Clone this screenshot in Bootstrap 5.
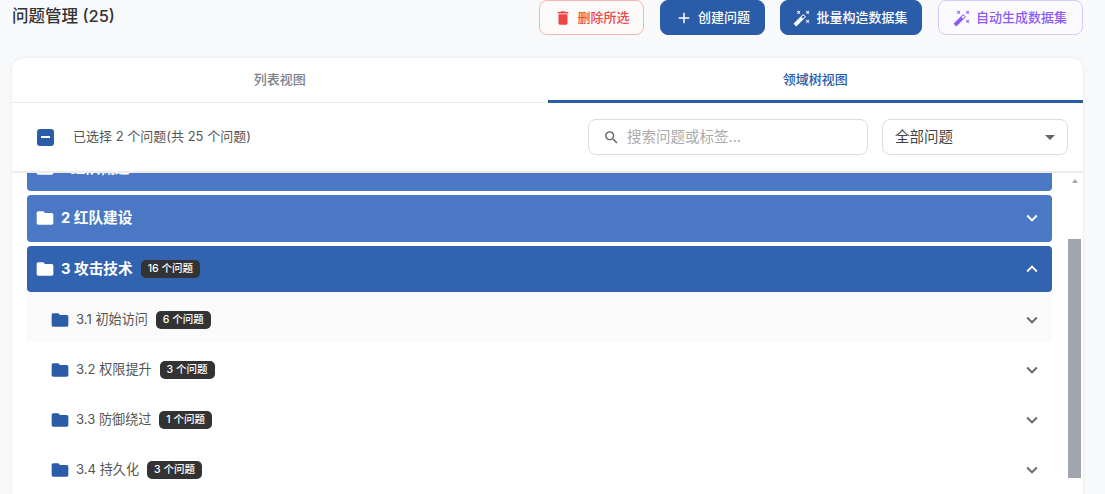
<!doctype html>
<html lang="zh-CN">

<head>
	<meta charset="utf-8">
	<meta name="viewport" content="width=device-width, initial-scale=1">
	<title>问题管理</title>
	<link href="https://cdn.jsdelivr.net/npm/bootstrap@5.3.3/dist/css/bootstrap.min.css" rel="stylesheet" crossorigin="anonymous">
	<style>
		html, body {
			height: 494px;
			overflow: hidden;
		}

		body {
			background: #f8f9fb;
			font-family: Inter, "Noto Sans CJK SC", sans-serif;
			color: #333;
		}

		.top-bar {
			height: 58px;
			padding: 0 22px 0 12px;
		}

		.page-title {
			font-size: 16.5px;
			font-weight: 500;
			line-height: 32px;
			margin: 0;
			color: #333;
		}

		.act-row {
			gap: 15.5px;
		}

		.act-btn {
			height: 35px;
			font-size: 13px;
			font-weight: 500;
			border-radius: 8px;
			padding: 0 14px;
			gap: 5px;
			border-width: 1px;
			border-style: solid;
			white-space: nowrap;
		}

		.act-btn svg {
			width: 18px;
			height: 18px;
			fill: currentColor;
		}

		.act-tight {
			padding-left: 12px;
		}

		.act-red {
			color: #f04545;
			border-color: #f9b4b4;
			background: #fdfafa;
		}

		.act-blue {
			color: #fff;
			border-color: #2b5ca8;
			background: #2b5ca8;
		}

		.act-purple {
			color: #8b5cf6;
			border-color: #d9c9fb;
			background: #fbfaff;
			padding-right: 15px;
		}

		.main-card {
			margin: 0 22px 0 12px;
			height: 460px;
			border-radius: 12px 12px 0 0;
			border: 0;
			box-shadow: 0 0 3px rgba(0, 0, 0, .1);
			overflow: hidden;
		}

		.view-tabs .nav-link {
			height: 45px;
			line-height: 43px;
			padding: 0;
			font-size: 13px;
			font-weight: 500;
			color: #7b8087;
			border-bottom: 1px solid #e9e9e9;
		}

		.view-tabs .nav-link.active {
			color: #2b5ca8;
			border-bottom: 3px solid #2b5ca8;
			border-radius: 2px 0 0 0;
		}

		.tool-row {
			height: 70px;
			padding: 0 15px 0 25px;
			border-bottom: 2px solid #ececec;
		}

		.sel-box {
			width: 17px;
			height: 17px;
			border-radius: 3px;
			background: #2b5ca8;
		}

		.sel-box span {
			width: 9px;
			height: 2px;
			background: #fff;
		}

		.sel-text {
			font-size: 13px;
			color: #555;
			margin-left: 19px;
		}

		.search-box {
			width: 280px;
			height: 36px;
			border: 1px solid #ddd;
			border-radius: 8px;
			padding: 0 14px;
			margin-left: auto;
			gap: 7px;
		}

		.search-box svg {
			width: 17px;
			height: 17px;
			fill: #666;
			flex: none;
		}

		.search-box input {
			border: 0;
			outline: 0;
			padding: 0;
			width: 100%;
			font-size: 14.5px;
			background: transparent;
		}

		.search-box input::placeholder {
			color: #aaa;
		}

		.filter-btn {
			width: 186px;
			height: 36px;
			margin-left: 14px;
			border: 1px solid #ddd;
			border-radius: 8px;
			background: #fff;
			padding: 0 12px;
			font-size: 14.5px;
			color: #444;
		}

		.filter-btn::after {
			border-top-width: 5px;
			border-left-width: 5.5px;
			border-right-width: 5.5px;
			border-top-color: #666;
			margin: 0;
		}

		.tree-wrap {
			overflow: hidden;
			height: 322px;
			padding-left: 15px;
		}

		.tree-list {
			width: 1025px;
			margin-top: -28.5px;
			flex: none;
		}

		.domain-row {
			height: 46.5px;
			margin-bottom: 4px;
			border-radius: 4px;
			padding: 0 9px 0 8px;
			color: #fff;
			font-size: 14.7px;
			font-weight: 700;
		}

		.domain-light {
			background: #4a78c4;
		}

		.domain-dark {
			background: #3263b0;
			margin-bottom: 0;
		}

		.tree-folder {
			width: 20px;
			height: 20px;
			flex: none;
			fill: currentColor;
			margin-right: 6px;
		}

		.tree-chevron {
			width: 22px;
			height: 22px;
			fill: currentColor;
			margin-left: auto;
		}

		.count-tag {
			background: #333;
			color: #fff;
			font-size: 10.5px;
			font-weight: 500;
			line-height: 18px;
			height: 18px;
			border-radius: 5px;
			padding: 0 7px;
			margin-left: 8px;
		}

		.sub-row {
			height: 50px;
			padding: 5px 9px 0 23px;
			font-size: 13.1px;
			color: #555;
		}

		.sub-row .tree-folder {
			color: #2b5ca8;
		}

		.sub-row .tree-chevron {
			color: #666;
		}

		.sub-first {
			background: #fafafa;
		}

		.rail {
			width: 13px;
			margin-left: 16px;
			flex: none;
		}

		.rail-arrow {
			width: 0;
			height: 0;
			margin: 6px auto 0;
			border-left: 3.5px solid transparent;
			border-right: 3.5px solid transparent;
			border-bottom: 4px solid #a3a8b0;
		}

		.rail-thumb {
			height: 239px;
			margin-top: 56px;
			background: #a0a5ae;
		}
	</style>
</head>

<body>
	<svg class="d-none">
		<symbol id="i-folder" viewBox="0 0 24 24"><path d="M10 4H4c-1.1 0-1.99.9-1.99 2L2 18c0 1.1.9 2 2 2h16c1.1 0 2-.9 2-2V8c0-1.1-.9-2-2-2h-8l-2-2z"/></symbol>
		<symbol id="i-down" viewBox="0 0 24 24"><path d="M16.59 8.59 12 13.17 7.41 8.59 6 10l6 6 6-6z"/></symbol>
		<symbol id="i-up" viewBox="0 0 24 24"><path d="m12 8-6 6 1.41 1.41L12 10.83l4.59 4.58L18 14z"/></symbol>
		<symbol id="i-wand" viewBox="0 0 24 24"><path d="M7.5 5.6 10 7 8.6 4.5 10 2 7.5 3.4 5 2l1.4 2.5L5 7zm12 9.8L17 14l1.4 2.5L17 19l2.5-1.4L22 19l-1.4-2.5L22 14zM22 2l-2.5 1.4L17 2l1.4 2.5L17 7l2.5-1.4L22 7l-1.4-2.5zm-7.63 5.29a.9959.9959 0 0 0-1.41 0L1.29 18.96c-.39.39-.39 1.02 0 1.41l2.34 2.34c.39.39 1.02.39 1.41 0L16.7 11.05c.39-.39.39-1.02 0-1.41l-2.33-2.35zm-1.03 5.49-2.12-2.12 2.44-2.44 2.12 2.12-2.44 2.44z"/></symbol>
	</svg>

	<div class="top-bar d-flex align-items-start justify-content-between">
		<h1 class="page-title">问题管理 (25)</h1>
		<div class="act-row d-flex">
			<button class="act-btn act-red d-flex align-items-center" type="button">
				<svg viewBox="0 0 24 24"><path d="M6 19c0 1.1.9 2 2 2h8c1.1 0 2-.9 2-2V7H6v12zM19 4h-3.5l-1-1h-5l-1 1H5v2h14V4z"/></svg>删除所选
			</button>
			<button class="act-btn act-blue d-flex align-items-center" type="button">
				<svg viewBox="0 0 24 24"><path d="M19 13h-6v6h-2v-6H5v-2h6V5h2v6h6v2z"/></svg>创建问题
			</button>
			<button class="act-btn act-tight act-blue d-flex align-items-center" type="button">
				<svg><use href="#i-wand"/></svg>批量构造数据集
			</button>
			<button class="act-btn act-purple d-flex align-items-center" type="button">
				<svg><use href="#i-wand"/></svg>自动生成数据集
			</button>
		</div>
	</div>

	<div class="card main-card">
		<ul class="nav nav-justified view-tabs">
			<li class="nav-item"><a class="nav-link" href="#">列表视图</a></li>
			<li class="nav-item"><a class="nav-link active" href="#">领域树视图</a></li>
		</ul>

		<div class="tool-row d-flex align-items-center">
			<div class="sel-box d-flex align-items-center justify-content-center"><span></span></div>
			<div class="sel-text">已选择 2 个问题(共 25 个问题)</div>
			<div class="search-box d-flex align-items-center">
				<svg viewBox="0 0 24 24"><path d="M15.5 14h-.79l-.28-.27C15.41 12.59 16 11.11 16 9.5 16 5.91 13.09 3 9.5 3S3 5.91 3 9.5 5.91 16 9.5 16c1.61 0 3.09-.59 4.23-1.57l.27.28v.79l5 4.99L20.49 19l-4.99-5zm-6 0C7.01 14 5 11.99 5 9.5S7.01 5 9.5 5 14 7.01 14 9.5 11.99 14 9.5 14z"/></svg>
				<input type="text" placeholder="搜索问题或标签...">
			</div>
			<button class="filter-btn dropdown-toggle d-flex align-items-center justify-content-between" type="button">全部问题</button>
		</div>

		<div class="tree-wrap d-flex">
			<div class="tree-list">
				<div class="domain-row domain-light d-flex align-items-center">
					<svg class="tree-folder"><use href="#i-folder"/></svg>1 红队概述
					<svg class="tree-chevron"><use href="#i-down"/></svg>
				</div>
				<div class="domain-row domain-light d-flex align-items-center">
					<svg class="tree-folder"><use href="#i-folder"/></svg>2 红队建设
					<svg class="tree-chevron"><use href="#i-down"/></svg>
				</div>
				<div class="domain-row domain-dark d-flex align-items-center">
					<svg class="tree-folder"><use href="#i-folder"/></svg>3 攻击技术
					<span class="count-tag">16 个问题</span>
					<svg class="tree-chevron"><use href="#i-up"/></svg>
				</div>
				<div class="sub-row sub-first d-flex align-items-center">
					<svg class="tree-folder"><use href="#i-folder"/></svg>3.1 初始访问
					<span class="count-tag">6 个问题</span>
					<svg class="tree-chevron"><use href="#i-down"/></svg>
				</div>
				<div class="sub-row d-flex align-items-center">
					<svg class="tree-folder"><use href="#i-folder"/></svg>3.2 权限提升
					<span class="count-tag">3 个问题</span>
					<svg class="tree-chevron"><use href="#i-down"/></svg>
				</div>
				<div class="sub-row d-flex align-items-center">
					<svg class="tree-folder"><use href="#i-folder"/></svg>3.3 防御绕过
					<span class="count-tag">1 个问题</span>
					<svg class="tree-chevron"><use href="#i-down"/></svg>
				</div>
				<div class="sub-row d-flex align-items-center">
					<svg class="tree-folder"><use href="#i-folder"/></svg>3.4 持久化
					<span class="count-tag">3 个问题</span>
					<svg class="tree-chevron"><use href="#i-down"/></svg>
				</div>
			</div>
			<div class="rail">
				<div class="rail-arrow"></div>
				<div class="rail-thumb"></div>
			</div>
		</div>
	</div>

	<script src="https://cdn.jsdelivr.net/npm/bootstrap@5.3.3/dist/js/bootstrap.bundle.min.js" crossorigin="anonymous"></script>
</body>

</html>
